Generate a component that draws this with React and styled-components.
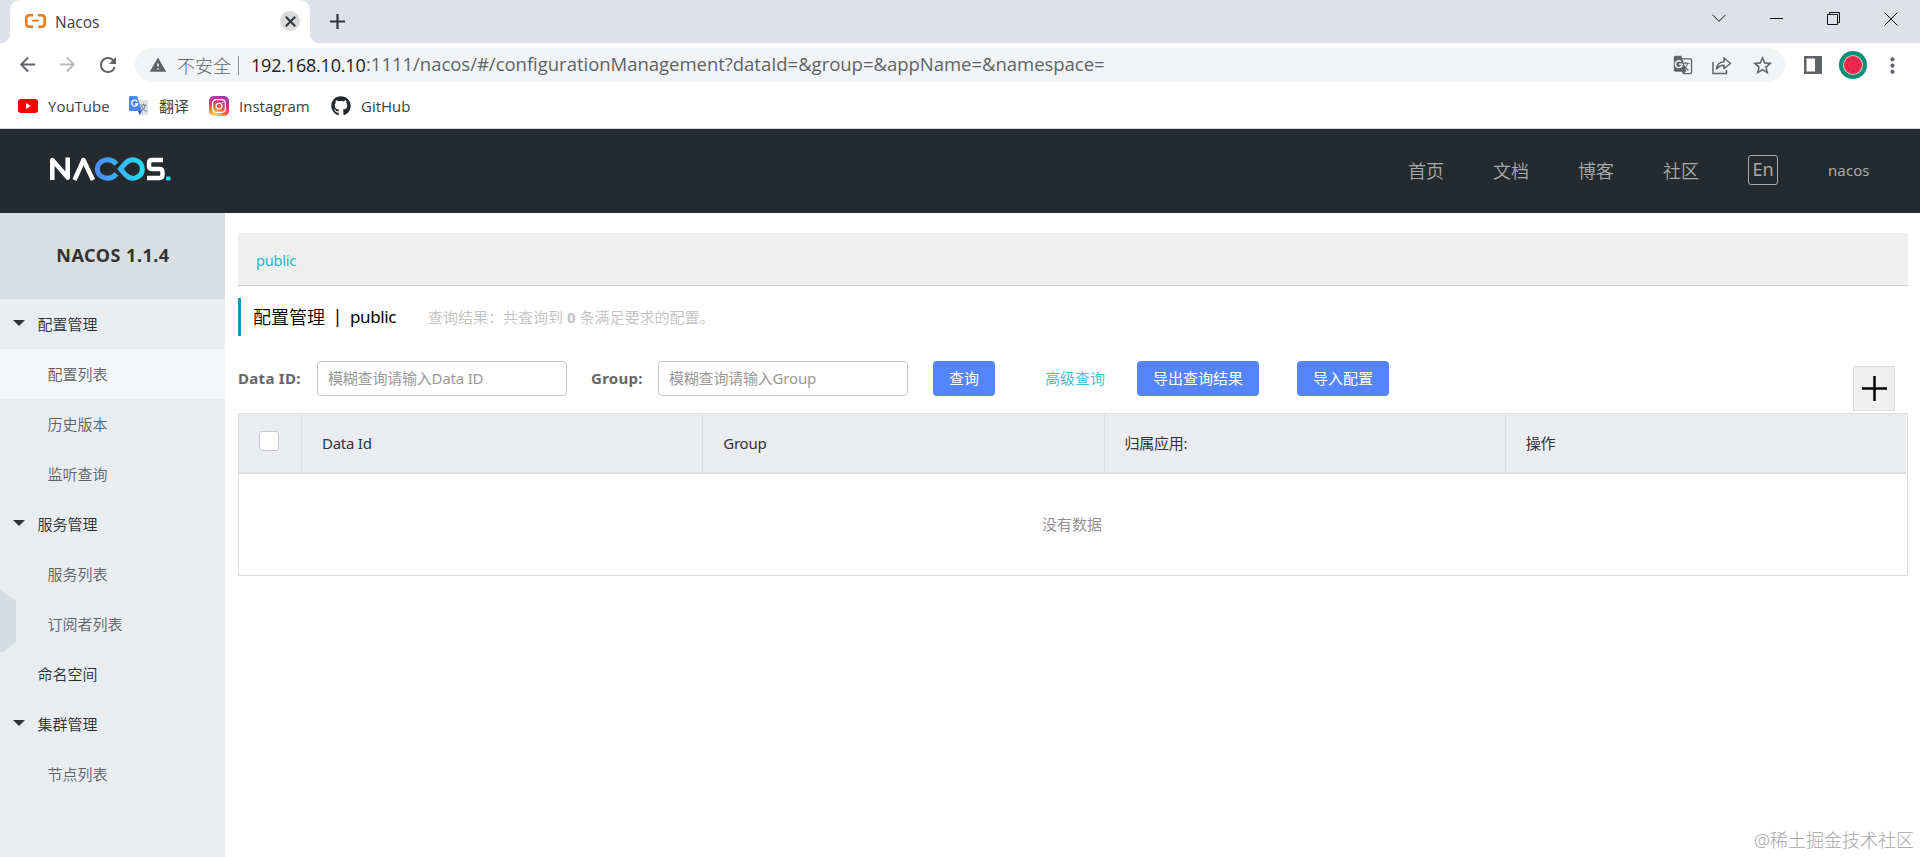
import styled, { createGlobalStyle, css } from "styled-components";
import { FaGithub, FaInstagram } from "react-icons/fa";
import { MdArrowBack, MdArrowForward, MdRefresh, MdWarning, MdGTranslate, MdStarBorder, MdMoreVert } from "react-icons/md";

const menu = [
  { label: "配置管理", parent: true },
  { label: "配置列表", child: true, active: true },
  { label: "历史版本", child: true },
  { label: "监听查询", child: true },
  { label: "服务管理", parent: true },
  { label: "服务列表", child: true },
  { label: "订阅者列表", child: true },
  { label: "命名空间" },
  { label: "集群管理", parent: true },
  { label: "节点列表", child: true },
];

const columns = ["Data Id", "Group", "归属应用:", "操作"];

function TabStrip() {
  return (
    <Strip>
      <Tab>
        <svg width="21" height="14" viewBox="0 0 21 14" fill="none" stroke="#ef7a1a" strokeWidth="2.6">
          <path d="M8 1.3H4.5Q1.3 1.3 1.3 4.3V9.7Q1.3 12.7 4.5 12.7H8M13 1.3H16.5Q19.7 1.3 19.7 4.3V9.7Q19.7 12.7 16.5 12.7H13" />
          <path d="M7 6.6H14" strokeWidth="1.8" />
        </svg>
        <TabTitle>Nacos</TabTitle>
        <CloseTab>
          <svg width="11" height="11" viewBox="0 0 11 11" stroke="#33363a" strokeWidth="2"><path d="M.8 .8L10.200 10.200M10.200 .8L.8 10.200" /></svg>
        </CloseTab>
      </Tab>
      <NewTab>
        <svg width="15" height="15" viewBox="0 0 15 15" stroke="#33363a" strokeWidth="2.2"><path d="M7.5 0V15M0 7.5H15" /></svg>
      </NewTab>
      <WindowButtons>
        <svg width="14" height="9" viewBox="0 0 14 9"><path d="M.5 .8L7 7.3L13.5 .8" /></svg>
        <svg width="13" height="9" viewBox="0 0 13 9"><path d="M0 4.5H13" /></svg>
        <svg width="13" height="13" viewBox="0 0 13 13"><path d="M.5 2.5H10.5V12.5H.5ZM2.5 2.5V.5H12.5V10.5H10.5" /></svg>
        <svg width="14" height="14" viewBox="0 0 14 14"><path d="M.5 .5L13.5 13.5M13.5 .5L.5 13.5" /></svg>
      </WindowButtons>
    </Strip>
  );
}

function Toolbar() {
  return (
    <Bar>
      <NavIcons>
        <MdArrowBack size={23} />
        <MdArrowForward size={23} color="#b9bbbe" />
        <MdRefresh size={24} />
      </NavIcons>
      <Address>
        <MdWarning size={18} />
        <Insecure>不安全</Insecure>
        <Divider />
        <Host>192.168.10.10</Host>
        <Path>:1111/nacos/#/configurationManagement?dataId=&amp;group=&amp;appName=&amp;namespace=</Path>
        <AddressIcons>
          <MdGTranslate size={20} />
          <svg width="20" height="20" viewBox="0 0 20 20" fill="none" stroke="#5f6368" strokeWidth="1.5">
            <path d="M1 7V18.5H14.5V15" />
            <path d="M4.5 14C5 9.5 8 7 12 6.8V3L18.5 8.5L12 13.5V10.3C9 10.3 6.5 11.3 4.5 14Z" strokeLinejoin="round" />
          </svg>
          <MdStarBorder size={23} />
        </AddressIcons>
      </Address>
      <Actions>
        <svg width="18" height="18" viewBox="0 0 18 18"><path fill="#5f6368" fillRule="evenodd" d="M0 0H18V18H0ZM2.5 2.5V15.5H11V2.5Z" /></svg>
        <svg width="28" height="28" viewBox="0 0 28 28">
          <circle cx="14" cy="14" r="14" fill="#0c8f78" />
          <circle cx="14" cy="14" r="10" fill="#d9c9b0" />
          <circle cx="14" cy="14" r="9" fill="#f0264f" />
          <g fill="#9c1f3c">
            <circle cx="10" cy="10" r=".7" /><circle cx="14" cy="8" r=".7" /><circle cx="18" cy="10" r=".7" />
            <circle cx="8" cy="14" r=".7" /><circle cx="20" cy="14" r=".7" />
            <circle cx="10" cy="18" r=".7" /><circle cx="14" cy="20" r=".7" /><circle cx="18" cy="18" r=".7" />
          </g>
        </svg>
        <MdMoreVert size={25} />
      </Actions>
    </Bar>
  );
}

function Bookmarks() {
  return (
    <BookmarkBar>
      <Bookmark $w={111}>
        <svg width="20" height="14" viewBox="0 0 20 14"><rect width="20" height="14" rx="3" fill="#f00" /><path d="M8 4L13 7L8 10Z" fill="#fff" /></svg>
        <span>YouTube</span>
      </Bookmark>
      <Bookmark $w={80}>
        <svg width="20" height="20" viewBox="0 0 20 20">
          <path d="M8 4H18Q19 4 19 5V18Q19 19 18 19H11Z" fill="#dfe1e5" />
          <path d="M1.5 0H8L13 15H1.5Q0 15 0 13.5V1.5Q0 0 1.5 0Z" fill="#4c87ee" />
          <path d="M9 15H13L10.5 19Z" fill="#2c57c4" />
          <path d="M8.3 5.6A3 3 0 1 0 8.6 8H6" fill="none" stroke="#fff" strokeWidth="1.3" />
          <path d="M11.5 9H17.5M14.5 7.5V9M16.5 9Q15.5 13 12.5 15M12.5 10Q14 14 17.5 15.5" fill="none" stroke="#6d7a87" />
        </svg>
        <span>翻译</span>
      </Bookmark>
      <Bookmark $w={122}>
        <InstaLogo><FaInstagram size={16} /></InstaLogo>
        <span>Instagram</span>
      </Bookmark>
      <Bookmark $w={100}>
        <FaGithub size={20} color="#24292e" />
        <span>GitHub</span>
      </Bookmark>
    </BookmarkBar>
  );
}

function Logo() {
  return (
    <svg width="121" height="24" viewBox="0 0 121 24" fill="none" strokeWidth="5">
      <defs>
        <linearGradient id="loop" x1="45" x2="95" y1="0" y2="0" gradientUnits="userSpaceOnUse">
          <stop offset="0" stopColor="#4a8bf8" />
          <stop offset="1" stopColor="#22dff0" />
        </linearGradient>
      </defs>
      <path d="M2.3 23V3L17.7 20.5V.5" stroke="#fff" strokeWidth="4.5" strokeLinejoin="round" />
      <path d="M24.5 23L33.5 3L43 23" stroke="#fff" strokeWidth="4.5" strokeLinejoin="round" />
      <path d="M66.5 17C59 25 47.3 20.5 47.3 12S59 -1 66.5 7" stroke="url(#loop)" />
      <path d="M70.5 12L75.5 6.2C82 -.5 92.3 3.8 92.3 12S82 24.5 75.5 17.8Z" stroke="url(#loop)" />
      <path d="M113 3H102Q99 3 99 6V9Q99 12 102 12H109.5Q112.5 12 112.5 15V18Q112.5 21 109.5 21H97" stroke="#fff" strokeWidth="4.4" />
      <rect x="116" y="19.5" width="4.5" height="4" rx="1" fill="#22dff0" />
    </svg>
  );
}

function Sidebar() {
  return (
    <Side>
      <SideTitle>NACOS 1.1.4</SideTitle>
      {menu.map((item) => (
        <MenuItem key={item.label} $child={item.child} $active={item.active}>
          <Caret $show={item.parent} />
          {item.label}
        </MenuItem>
      ))}
      <SideHandle />
    </Side>
  );
}

function ConfigPage() {
  return (
    <Content>
      <Namespace>public</Namespace>
      <TitleRow>
        <Title>配置管理</Title>
        <TitleBar>|</TitleBar>
        <TitleName>public</TitleName>
        <Result>查询结果：共查询到 <b>0</b> 条满足要求的配置。</Result>
      </TitleRow>
      <SearchRow>
        <Label $w={79}>Data ID:</Label>
        <Input placeholder="模糊查询请输入Data ID" />
        <Label $w={67} $gap={24}>Group:</Label>
        <Input placeholder="模糊查询请输入Group" />
        <Button $w={62} $gap={25}>查询</Button>
        <Advanced>高级查询</Advanced>
        <Button $w={122} $gap={31}>导出查询结果</Button>
        <Button $w={92} $gap={38}>导入配置</Button>
        <AddButton>
          <svg width="25" height="25" viewBox="0 0 25 25" stroke="#000" strokeWidth="2.5"><path d="M12.5 0V25M0 12.5H25" /></svg>
        </AddButton>
      </SearchRow>
      <Table>
        <HeadRow>
          <CheckCell><Checkbox /></CheckCell>
          {columns.map((name) => (<HeadCell key={name}>{name}</HeadCell>))}
        </HeadRow>
        <Empty>没有数据</Empty>
      </Table>
    </Content>
  );
}

export default function App() {
  return (
    <>
      <GlobalStyle />
      <Window>
        <TabStrip />
        <Toolbar />
        <Bookmarks />
        <Header>
          <Logo />
          <Nav>
            <NavLink>首页</NavLink>
            <NavLink>文档</NavLink>
            <NavLink>博客</NavLink>
            <NavLink>社区</NavLink>
            <Lang>En</Lang>
            <User>nacos</User>
          </Nav>
        </Header>
        <Body>
          <Sidebar />
          <ConfigPage />
        </Body>
        <Watermark>@稀土掘金技术社区</Watermark>
      </Window>
    </>
  );
}

const GlobalStyle = createGlobalStyle`
*{box-sizing:border-box;}
body{
margin:0;
background:#fff;
overflow:hidden;
font-family:"Noto Sans","Noto Sans CJK SC",sans-serif;
}
svg{flex-shrink:0;}
`
const chromeFont = css`
font-family:"Open Sans","Noto Sans CJK SC",sans-serif;
`
const Window = styled.div`
width:1920px;
height:857px;
display:flex;
flex-direction:column;
position:relative;
overflow:hidden;
`
const Strip = styled.div`
${chromeFont}
height:43px;
flex-shrink:0;
display:flex;
background:#dee1e7;
padding-left:10px;
`
const Tab = styled.div`
width:300px;
height:43px;
border-radius:10px 10px 0 0;
background:#fff;
display:flex;
align-items:center;
padding:0 10px 1px 15px;
position:relative;
&::before,&::after{
content:"";
position:absolute;
bottom:0;
width:10px;
height:10px;
}
&::before{
left:-10px;
background:radial-gradient(circle at 0 0,transparent 10px,#fff 10.5px);
}
&::after{
right:-10px;
background:radial-gradient(circle at 100% 0,transparent 10px,#fff 10.5px);
}
`
const TabTitle = styled.span`
margin-left:9px;
padding-top:2px;
flex:1;
font-size:15.5px;
color:#3c4043;
`
const CloseTab = styled.div`
width:20px;
height:20px;
border-radius:50%;
background:#dadada;
display:flex;
align-items:center;
justify-content:center;
`
const NewTab = styled.div`
display:flex;
align-items:center;
padding:0 0 1px 20px;
`
const WindowButtons = styled.div`
margin-left:auto;
height:37px;
display:flex;
align-items:center;
gap:44px;
padding-right:22px;
svg{
fill:none;
stroke:#111;
}
`
const Bar = styled.div`
${chromeFont}
height:44px;
flex-shrink:0;
display:flex;
align-items:center;
color:#5f6368;
`
const NavIcons = styled.div`
width:135px;
display:flex;
gap:17px;
padding-left:16px;
`
const Address = styled.div`
width:1650px;
height:34px;
border-radius:17px;
background:#f1f3f4;
display:flex;
align-items:center;
padding:0 11px 0 14px;
font-size:18px;
`
const Insecure = styled.span`
margin-left:10px;
width:54px;
font-weight:300;
`
const Divider = styled.span`
width:1px;
height:19px;
background:#8a8d91;
margin:0 12px 0 7px;
`
const Host = styled.span`
width:115px;
color:#202124;
letter-spacing:-0.2px;
white-space:nowrap;
`
const Path = styled.span`
font-size:18.5px;
line-height:24px;
padding-bottom:2px;
letter-spacing:-0.02px;
white-space:nowrap;
`
const AddressIcons = styled.div`
margin-left:auto;
display:flex;
align-items:center;
gap:19px;
`
const Actions = styled.div`
display:flex;
align-items:center;
gap:17px;
padding-left:19px;
svg:last-child{margin-left:-4px;}
`
const BookmarkBar = styled.div`
${chromeFont}
height:42px;
flex-shrink:0;
display:flex;
padding-left:18px;
border-bottom:1px solid #d5d7da;
`
const Bookmark = styled.div`
width:${(props) => props.$w}px;
height:38px;
display:flex;
align-items:center;
gap:10px;
font-size:15px;
color:#3c4043;
span{padding-bottom:1px;}
`
const InstaLogo = styled.div`
width:20px;
height:20px;
border-radius:5px;
background:radial-gradient(circle at 30% 105%,#fdd35c 10%,#f7663c 40%,#d52f85 65%,#7b3fc4 100%);
color:#fff;
display:flex;
align-items:center;
justify-content:center;
`
const Header = styled.div`
height:84px;
flex-shrink:0;
background:#252a2f;
display:flex;
align-items:center;
padding:0 50px 5px;
`
const Nav = styled.div`
margin-left:auto;
display:flex;
align-items:center;
padding-top:2px;
color:#a8aaac;
`
const NavLink = styled.span`
width:36px;
margin-right:49px;
font-size:18px;
font-weight:350;
white-space:nowrap;
`
const Lang = styled.span`
width:30px;
height:30px;
border:1px solid #a8aaac;
border-radius:3px;
display:flex;
align-items:center;
justify-content:center;
font-size:18px;
line-height:24px;
padding-bottom:2px;
margin-right:50px;
`
const User = styled.span`
width:42px;
font-size:15px;
letter-spacing:0.1px;
`
const Body = styled.div`
flex:1;
display:flex;
`
const Side = styled.div`
width:225px;
background:#e9edf0;
position:relative;
`
const SideTitle = styled.div`
height:86px;
background:#d8dee2;
color:#333;
font-size:18px;
letter-spacing:0.5px;
font-weight:bold;
display:flex;
justify-content:center;
align-items:center;
padding:0 0 2px 1px;
`
const MenuItem = styled.div`
height:50px;
display:flex;
align-items:center;
padding:0 0 2px ${(props) => (props.$child ? 10 : 0)}px;
background:${(props) => (props.$active ? "#f4f7f9" : "transparent")};
color:${(props) => (props.$child ? "#5e6165" : "#2c2f33")};
font-size:15px;
font-weight:350;
`
const Caret = styled.span`
width:12px;
height:6px;
margin:0 12.5px 0 13px;
background:${(props) => (props.$show ? "#333" : "transparent")};
clip-path:polygon(0 0,100% 0,50% 100%);
`
const SideHandle = styled.div`
position:absolute;
left:0;
top:377px;
width:16px;
height:62px;
background:#d6dde1;
clip-path:polygon(0 0,100% 17%,100% 83%,20% 100%,0 100%);
`
const Content = styled.div`
flex:1;
padding:20px 12px 0 13px;
display:flex;
flex-direction:column;
`
const Namespace = styled.div`
height:53px;
background:#efefef;
border-bottom:1px solid #ccc;
padding:2px 0 0 18px;
display:flex;
align-items:center;
font-size:14.5px;
letter-spacing:-0.2px;
color:#1fb5d6;
`
const TitleRow = styled.div`
height:38px;
margin-top:12px;
border-left:3px solid #1195c2;
padding:0 0 3px 12px;
display:flex;
align-items:center;
font-size:18px;
color:#000;
`
const Title = styled.span`
width:72px;
font-weight:350;
`
const TitleBar = styled.span`
width:25px;
text-align:center;
`
const TitleName = styled.span`
width:78px;
padding-top:1px;
font-size:17px;
letter-spacing:-0.4px;
`
const Result = styled.span`
padding-top:1px;
font-size:15px;
font-weight:350;
color:#c2c2c2;
`
const SearchRow = styled.div`
height:77px;
display:flex;
align-items:flex-start;
padding-top:25px;
`
const Label = styled.span`
width:${(props) => props.$w}px;
margin-left:${(props) => props.$gap || 0}px;
line-height:35px;
font-size:15px;
letter-spacing:0.3px;
font-weight:bold;
color:#666;
`
const Input = styled.input`
width:250px;
height:35px;
border:1px solid #c4c6cf;
border-radius:4px;
padding:0 10px 2px;
font-family:inherit;
font-size:15px;
letter-spacing:-0.2px;
&::placeholder{color:#999;}
`
const Button = styled.button`
width:${(props) => props.$w}px;
height:35px;
margin-left:${(props) => props.$gap}px;
border:0;
border-radius:4px;
background:#5584ff;
color:#fff;
font-family:inherit;
font-size:15px;
padding:0 0 2px;
white-space:nowrap;
`
const Advanced = styled.span`
margin-left:50px;
width:61px;
line-height:34px;
font-size:15px;
font-weight:350;
color:#33c2d8;
white-space:nowrap;
`
const AddButton = styled.div`
width:42px;
height:45px;
margin:5px 13px 0 auto;
border:1px solid #dcdcdc;
background:#efefef;
display:flex;
align-items:center;
justify-content:center;
`
const Table = styled.div`
height:163px;
border:1px solid #dcdee3;
font-size:15px;
`
const HeadRow = styled.div`
height:60px;
margin-right:1px;
background:#ebecf0;
border-bottom:2px solid #dcdee3;
display:flex;
`
const CheckCell = styled.div`
width:62px;
padding:17px 20px;
`
const Checkbox = styled.div`
width:20px;
height:20px;
border:1px solid #c4c6cf;
border-radius:3px;
background:#fff;
`
const HeadCell = styled.div`
flex:1;
border-left:1px solid #dcdee3;
padding:0 0 1px 20px;
display:flex;
align-items:center;
letter-spacing:-0.25px;
color:#333;
`
const Empty = styled.div`
height:99px;
padding:0 2px 1px 0;
display:flex;
align-items:center;
justify-content:center;
font-weight:350;
color:#8c8c8c;
`
const Watermark = styled.div`
position:absolute;
right:6px;
bottom:5px;
font-size:18px;
font-weight:300;
color:#a5a5a5;
`
